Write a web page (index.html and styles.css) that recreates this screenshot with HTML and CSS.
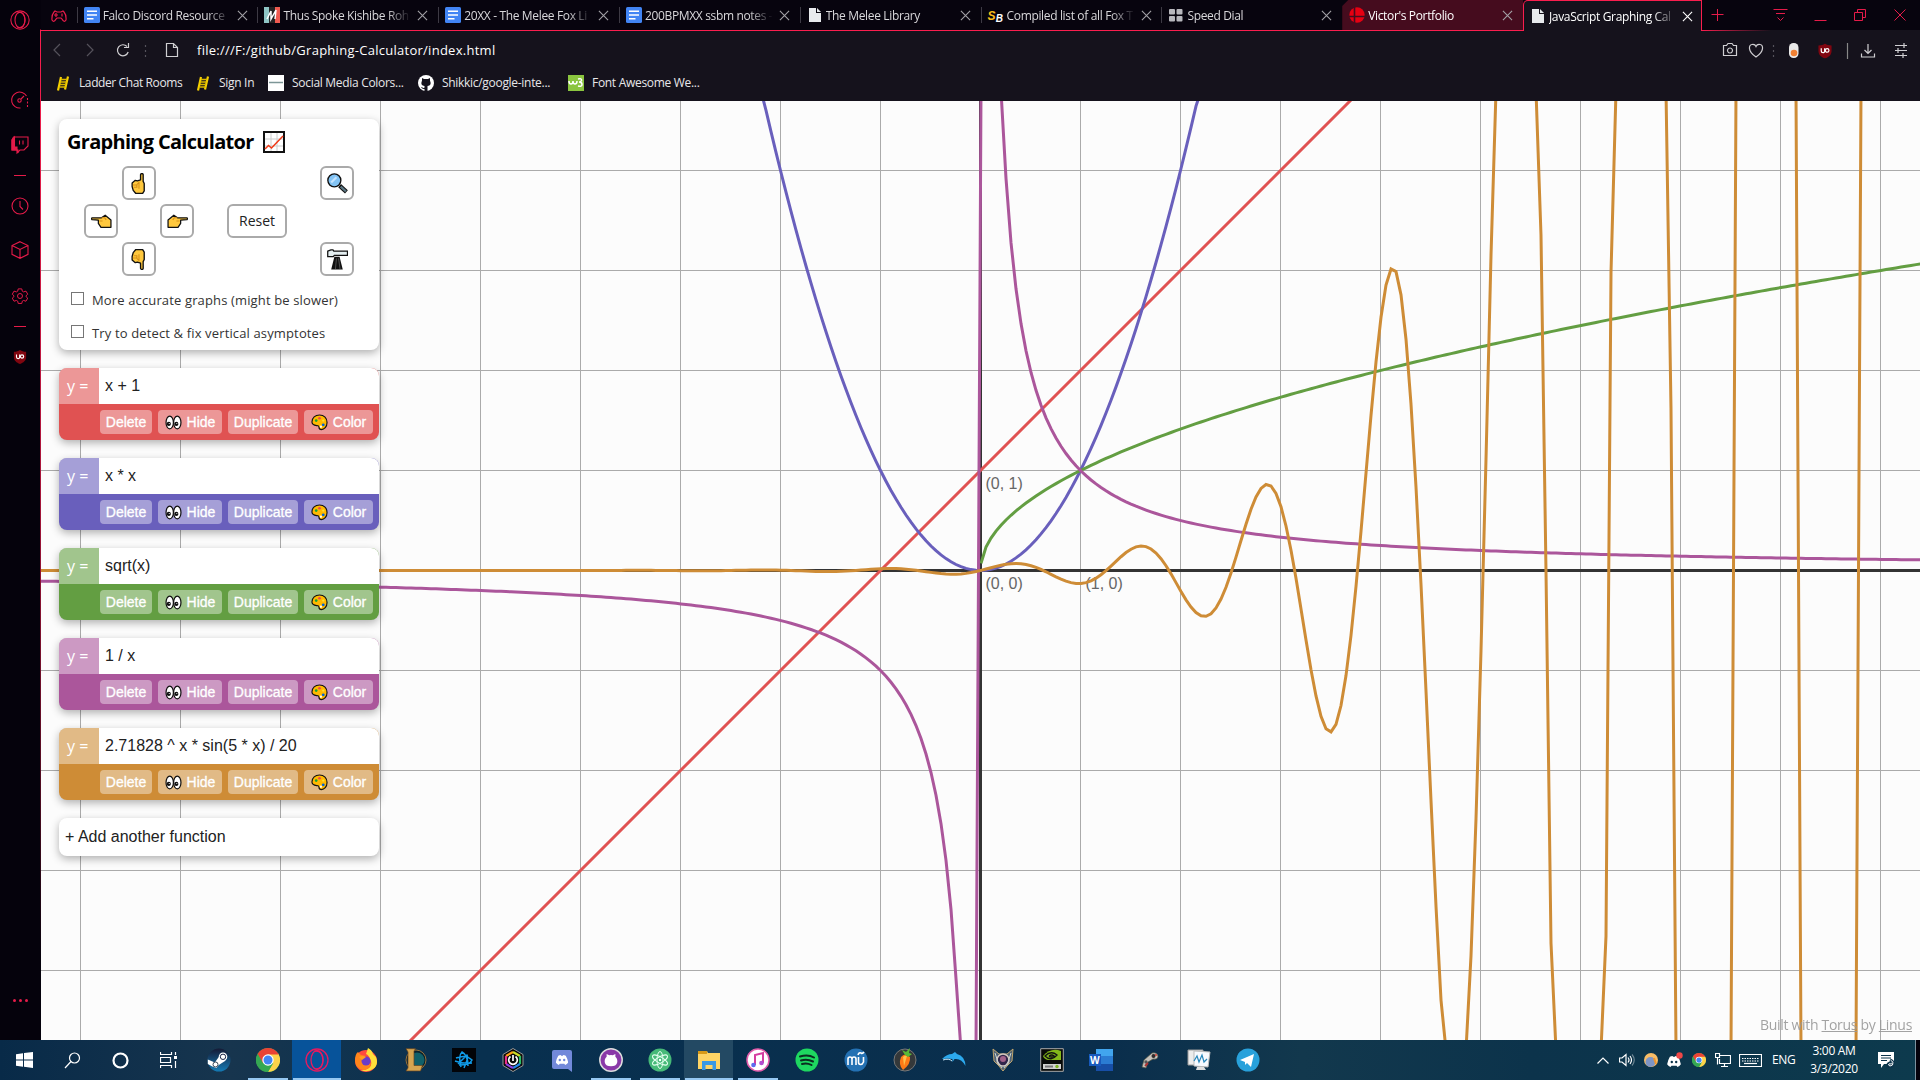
FILE: index.html
```html
<!DOCTYPE html>
<html lang="en">
<head>
    <meta charset="UTF-8">
    <title>JavaScript Graphing Calculator</title>
    <link rel="stylesheet" href="styles.css">
</head>
<body>
    <svg class="sprites" width="0" height="0">
        <symbol id="close" viewBox="0 0 12 12"><path d="M1 1l10 10M11 1L1 11" fill="none" stroke="currentColor" stroke-width="1.2"/></symbol>
        <symbol id="doc" viewBox="0 0 16 16"><rect width="16" height="16" rx="1.5" fill="#4285f4"/><path d="M3 4.2h10M3 8h10M3 11.8h6.5" stroke="#fff" stroke-width="1.6"/></symbol>
        <symbol id="page" viewBox="0 0 16 16"><path d="M2 1h7v5h5v9H2z" fill="#e8eaed"/><path d="M10 1l4 4h-4z" fill="#e8eaed"/></symbol>
        <symbol id="ladder" viewBox="0 0 16 16"><path d="M6 2L3 15.500M13 1.500l-3 13" stroke="#f5d000" stroke-width="2.200"/><path d="M6 4.500h6M5.500 7h6M5 9.500h6M4.500 12h6" stroke="#d9b800" stroke-width="1.500"/></symbol>
        <symbol id="ublock" viewBox="0 0 16 16"><path d="M8 0c2 1.500 4 2 7 2v6c0 4-3 6.500-7 8-4-1.500-7-4-7-8V2c3 0 5-.5 7-2z" fill="#800610"/><path d="M4 5v3q0 1.800 1.800 1.800T7.600 8V5" fill="none" stroke="#fff" stroke-width="1.300"/><circle cx="10.300" cy="7.400" r="1.900" fill="none" stroke="#fff" stroke-width="1.300"/></symbol>
        <symbol id="opera" viewBox="0 0 24 24"><g fill="none" stroke="currentColor" stroke-width="1.300"><circle cx="12" cy="12" r="11"/><ellipse cx="12" cy="12" rx="6" ry="9.500"/><path d="M9 3.500c12-4 12 21 0 17"/></g></symbol>
        <symbol id="chrome" viewBox="0 0 24 24"><circle cx="12" cy="12" r="12" fill="#4caf50"/><path d="M1.600 6a12 12 0 0 1 20.800 0L12 12z" fill="#ea4335"/><path d="M1.600 6l5.200 9L12 6.500z" fill="#ea4335"/><path d="M22.400 6A12 12 0 0 1 12 24l5.200-9L12 6z" fill="#fdd34a"/><path d="M1.600 6a12 12 0 0 0 10.400 18l5.200-9-5 1.500-5.400-1.500z" fill="#35a853"/><path d="M12 6h10.400" stroke="#ea4335"/><circle cx="12" cy="12" r="5.700" fill="#fff"/><circle cx="12" cy="12" r="4.500" fill="#4285f4"/></symbol>
        <symbol id="discord" viewBox="0 0 20 16"><path d="M4 1q2-1 4-1l.5 1h3L12 0q2 0 4 1 3 5 4 11-2 3-5 4l-1.300-2h-7.400L5 16q-3-1-5-4Q1 6 4 1z" fill="currentColor"/></symbol>
        <symbol id="cat" viewBox="0 0 16 16"><path d="M3 3v-3l3 1.500q2-.5 4 0L13 0v3q3 3 2 7-1 4-7 4t-7-4q-1-4 2-7z" fill="currentColor"/></symbol>
        <symbol id="hand" viewBox="0 0 20 20"><path d="M11 1.500q.3-1 1.300-1t1.200 1v6.500l1 2v7l-1.500 2.500H6.500L4 16.500 3 13V9.500L6 7l2 .5 3-1z" fill="#ffc83d" stroke="#111" stroke-width="1.300" stroke-linejoin="round"/><path d="M3.500 11.500h4v2h-3M7.500 11l2-2v6" fill="none" stroke="#d68f18" stroke-width="1"/></symbol>
        <symbol id="hand-side" viewBox="0 0 20 20"><path d="M1 6.500q-1 .8 0 1.800l6 .5v3l2.500 3.700h9.500v-7L13.500 4 10 6.500z" fill="#ffc83d" stroke="#111" stroke-width="1.200" stroke-linejoin="round"/><path d="M10 6.500h3l1.500 2M8 9.500h3" fill="none" stroke="#d68f18"/></symbol>
        <symbol id="eyes" viewBox="0 0 18 16"><g fill="#fff" stroke="#111" stroke-width="1.300"><ellipse cx="5" cy="8" rx="3.900" ry="6.700"/><ellipse cx="13" cy="8" rx="3.900" ry="6.700"/></g><circle cx="4" cy="9.500" r="2.200" fill="#111"/><circle cx="12" cy="9.500" r="2.200" fill="#111"/><circle cx="4.500" cy="9" r=".6" fill="#fff"/><circle cx="12.500" cy="9" r=".6" fill="#fff"/></symbol>
        <symbol id="palette" viewBox="0 0 18 18"><path d="M9 1c5 0 8 3.500 8 8 0 4.500-3 7.500-6 7.500-4 0-1.500-3.500-3.500-4S1 12.500 1 8.500C1 4 4.500 1 9 1z" fill="#ffb900" stroke="#111" stroke-width="1.200"/><circle cx="5.500" cy="7" r="1.400" fill="#16a339"/><circle cx="9" cy="4.500" r="1.400" fill="#e74856"/><circle cx="13" cy="11.500" r="1.500" fill="#0063d8"/><circle cx="13" cy="7" r="1.200" fill="#ffe03a"/><circle cx="10.500" cy="13.500" r="1.200" fill="#fff"/></symbol>
    </svg>

    <div class="window">
        <nav class="sidebar">
            <svg class="side-logo" viewBox="0 0 24 24"><use href="#opera"/></svg>
            <svg class="side-speed" viewBox="0 0 18 18"><path d="M9.500 17A8 8 0 1 1 15.500 5" /><path d="M16.500 7v9" stroke-dasharray="2 1.500"/><circle cx="8.500" cy="9.500" r="1.700"/><path d="M10 8l3-3"/></svg>
            <svg class="side-twitch" viewBox="0 0 18 18"><path d="M2.500 1H17v9l-4 4H9l-3 3v-3H1V4z"/><path d="M1 4l2.500-3v10H6v3L7 17v-3H1z" fill="currentColor"/><path d="M8.500 4.500v4M12 4.500v4"/></svg>
            <hr>
            <svg class="side-clock" viewBox="0 0 18 18"><circle cx="9" cy="9" r="8"/><path d="M9 4v5.500l3 3"/></svg>
            <svg class="side-cube" viewBox="0 0 18 18"><path d="M9 .7l8 3.800v8.800l-8 4-8-4V4.500zM1 4.500l8 4 8-4M9 8.500v8.800"/></svg>
            <svg class="side-gear" viewBox="0 0 18 18"><circle cx="9" cy="9" r="2.800"/><path d="M7 1h4l.6 2.600 1.500.8L15.700 3.500l2 3.500-2 1.800v.8l2 1.800-2 3.500-2.600-.9-1.500.8L11 17.400H7l-.6-2.600-1.500-.8-2.600.9-2-3.500 2-1.800v-.8L.3 7l2-3.500 2.600.9 1.500-.8z"/></svg>
            <hr class="second">
            <svg class="side-ublock" viewBox="0 0 16 16"><use href="#ublock"/></svg>
            <div class="side-more"><i></i><i></i><i></i></div>
        </nav>

        <main class="browser">
            <div class="tabs">
                <div class="pinned"><svg width="16" height="12" viewBox="0 0 16 12"><path d="M4 1L3 2Q.5 5 1 10q2 3 4-1l1-1h4l1 1q2 4 4 1 .5-5-2-8l-1-1-2 1H6z"/><path d="M3 5h4M5 3v4M11 3.500v3"/></svg></div>
                <div class="tab"><svg class="fav"><use href="#doc"/></svg><span>Falco Discord Resource</span><svg class="x"><use href="#close"/></svg></div>
                <div class="tab"><svg class="fav" viewBox="0 0 16 16"><path d="M0 0h5v16H0z" fill="#8ec5c5"/><path d="M5 0h6v16H5z" fill="#222"/><path d="M11 0h5v16h-5z" fill="#ef5a50"/><path d="M3 12l4-8v8l5-9-1 9" fill="none" stroke="#fff" stroke-width="1.500"/></svg><span>Thus Spoke Kishibe Roh</span><svg class="x"><use href="#close"/></svg></div>
                <div class="tab"><svg class="fav"><use href="#doc"/></svg><span>20XX - The Melee Fox Li</span><svg class="x"><use href="#close"/></svg></div>
                <div class="tab"><svg class="fav"><use href="#doc"/></svg><span>200BPMXX ssbm notes -</span><svg class="x"><use href="#close"/></svg></div>
                <div class="tab"><svg class="fav"><use href="#page"/></svg><span>The Melee Library</span><svg class="x"><use href="#close"/></svg></div>
                <div class="tab"><b class="fav sb"><i>S</i>B</b><span>Compiled list of all Fox T</span><svg class="x"><use href="#close"/></svg></div>
                <div class="tab"><svg class="fav" viewBox="0 0 16 16" fill="#b8b8bd"><rect x="1" y="2" width="6" height="5.500" rx="1"/><rect x="8.500" y="2" width="6" height="5.500" rx="1"/><rect x="1" y="9" width="6" height="5.500" rx="1"/><rect x="8.500" y="9" width="6" height="5.500" rx="1"/></svg><span>Speed Dial</span><svg class="x"><use href="#close"/></svg></div>
                <div class="tab visited"><svg class="fav" viewBox="0 0 16 16"><circle cx="8" cy="8" r="7.700" fill="#e60012"/><path d="M5.500 0v16M0 9.500h16" stroke="#450c1e" stroke-width="1.600"/></svg><span>Victor's Portfolio</span><svg class="x"><use href="#close"/></svg></div>
                <div class="tab active"><svg class="fav"><use href="#page"/></svg><span>JavaScript Graphing Cal</span><svg class="x"><use href="#close"/></svg></div>
                <div class="window-buttons">
                    <svg viewBox="0 0 218 31"><path d="M15.500 9v12M9.500 14.500h12"/><path d="M71.500 9.500h14M74 13.500h9M75.500 17.500l3 3 3-3M112.500 20.500h12M152.500 12.500h8v8h-8zM155.500 12V9.500h8v8H161M192.500 9.500l11 11M203.500 9.500l-11 11"/></svg>
                </div>
            </div>

            <div class="toolbar">
                <svg class="nav-icons" viewBox="0 0 150 40"><g class="dim"><path d="M19 13l-6 6 6 6M46 13l6 6-6 6"/><path d="M104.500 14v12" stroke-dasharray="2 3"/></g><path d="M86 15.500a5.500 5.500 0 1 0 1.200 5.500M87.500 12v4.500H83"/><path d="M125.500 12.500h7l4 4v9h-11zM132.500 12.500v4h4"/></svg>
                <div class="url">file:///F:/github/Graphing-Calculator/index.html</div>
                <svg class="tools" viewBox="0 0 200 40">
                    <path d="M3.500 14.500h3l1.500-2h4l1.500 2h3v10h-13zM10 17a2.500 2.500 0 1 0 .01 0zM36 26c-9-6-7-12-4-12.500q3-.5 4 2 1-2.500 4-2c3 .5 5 6.500-4 12.500z"/>
                    <path class="dim" d="M53.500 14v12" stroke-dasharray="2 3"/>
                    <rect x="69" y="12" width="9.500" height="15" rx="4.500" fill="#e9e9e9" stroke="none"/><circle cx="74" cy="22" r="3.300" fill="#f08033" stroke="none"/>
                    <svg class="shield" x="97.500" y="12" width="15" height="16" viewBox="0 0 16 16"><use href="#ublock"/></svg>
                    <path stroke="#888" d="M127.500 12v16"/>
                    <path d="M148 13v9M144.500 19l3.500 3.500 3.500-3.500M141.500 22.500v3.500h13v-3.500"/>
                    <path d="M175 14.500h12M175 19.500h12M175 24.500h12M184 12v5M178 17v5M183 22v5"/>
                </svg>
            </div>

            <div class="bookmarks">
                <a class="bm1"><svg><use href="#ladder"/></svg>Ladder Chat Rooms</a>
                <a class="bm2"><svg><use href="#ladder"/></svg>Sign In</a>
                <a class="bm3"><svg viewBox="0 0 16 16"><path fill="#fff" d="M0 0h16v16H0z"/><path d="M1 7.500h14" stroke="#7d9697" stroke-width="1.500"/></svg>Social Media Colors...</a>
                <a class="bm4"><svg viewBox="0 0 16 16"><circle cx="8" cy="8" r="8" fill="#fff"/><path d="M4 3l2 1h4l2-1v2.500q2 5-2.500 5.500v5h-3v-2q-2.500.5-3.500-2 1.500 0 2 1l1.500-.2v-1.800Q2 10.500 4 5.500z" fill="#15121c"/></svg>Shikkic/google-inte...</a>
                <a class="bm5"><svg viewBox="0 0 16 16"><path fill="#8bc53f" d="M0 0h16v16H0z"/><path d="M1 6q0 3 2 3t2-3q0 3 2 3t2-3M10 4q4-1 3.500 1.500Q13 7 11 7q3 0 3 2.500T10 11" fill="none" stroke="#fff" stroke-width="1.500"/></svg>Font Awesome We...</a>
            </div>

            <section class="viewport">
                <svg id="graph" width="1879" height="939"></svg>

                <div class="panels">
                    <div class="panel controls">
                        <h1>Graphing Calculator <svg viewBox="0 0 22 22"><path d="M1 1h20v20H1z" fill="#fff" stroke="#111" stroke-width="2"/><path d="M2 8h18M2 15h18M8 2v18M14 2v18" stroke="#ccc"/><path d="M2 18l3.500-3.500 3 2.500L20 5" fill="none" stroke="#f03a17" stroke-width="1.500"/></svg></h1>
                        <div class="pad">
                            <button class="up"><svg><use href="#hand"/></svg></button>
                            <button class="left"><svg><use href="#hand-side"/></svg></button>
                            <button class="right"><svg><use href="#hand-side"/></svg></button>
                            <button class="down"><svg><use href="#hand"/></svg></button>
                            <button class="reset">Reset</button>
                            <button class="zoom-in"><svg viewBox="0 0 20 20"><path d="M12 12l6.500 6" stroke="#111" stroke-width="4"/><path d="M13 13l5 4.500" stroke="#5b7784" stroke-width="2"/><circle cx="7" cy="7" r="6.200" fill="#83c4f5" stroke="#111" stroke-width="1.300"/><path d="M4 9l5-5" stroke="#c5e4ff" stroke-width="2"/></svg></button>
                            <button class="zoom-out"><svg viewBox="0 0 20 20"><path d="M7 7.500L4 19.500h11L12 7.500z" fill="#111"/><path d="M9 9l-1 10.500M11 9l1.500 10.500" stroke="#888" stroke-width=".5"/><path d="M.7 2l3-1.200h2L6.500 2h13v4H7L6 7.200H.7z" fill="#e4eef0" stroke="#111" stroke-width="1.200"/></svg></button>
                        </div>
                        <label><input type="checkbox">More accurate graphs (might be slower)</label>
                        <label><input type="checkbox">Try to detect &amp; fix vertical asymptotes</label>
                    </div>

                    <div class="panel function red">
                        <div class="equation"><span>y =</span><p>x + 1</p></div>
                        <div class="actions"><button>Delete</button><button><svg><use href="#eyes"/></svg>Hide</button><button>Duplicate</button><button><svg><use href="#palette"/></svg>Color</button></div>
                    </div>
                    <div class="panel function blue">
                        <div class="equation"><span>y =</span><p>x * x</p></div>
                        <div class="actions"><button>Delete</button><button><svg><use href="#eyes"/></svg>Hide</button><button>Duplicate</button><button><svg><use href="#palette"/></svg>Color</button></div>
                    </div>
                    <div class="panel function green">
                        <div class="equation"><span>y =</span><p>sqrt(x)</p></div>
                        <div class="actions"><button>Delete</button><button><svg><use href="#eyes"/></svg>Hide</button><button>Duplicate</button><button><svg><use href="#palette"/></svg>Color</button></div>
                    </div>
                    <div class="panel function purple">
                        <div class="equation"><span>y =</span><p>1 / x</p></div>
                        <div class="actions"><button>Delete</button><button><svg><use href="#eyes"/></svg>Hide</button><button>Duplicate</button><button><svg><use href="#palette"/></svg>Color</button></div>
                    </div>
                    <div class="panel function orange">
                        <div class="equation"><span>y =</span><p>2.71828 ^ x * sin(5 * x) / 20</p></div>
                        <div class="actions"><button>Delete</button><button><svg><use href="#eyes"/></svg>Hide</button><button>Duplicate</button><button><svg><use href="#palette"/></svg>Color</button></div>
                    </div>
                    <div class="panel add">+ Add another function</div>
                </div>

                <footer>Built with <u>Torus</u> by <u>Linus</u></footer>
            </section>
        </main>
    </div>

    <div class="taskbar">
        <div class="system">
            <div><svg width="17" height="16" viewBox="0 0 17 16" fill="#fff"><path d="M0 2.300l7-1v6.200H0zM8 1.100L17 0v7.500H8zM0 8.500h7v6.200l-7-1zM8 8.500h9V16l-9-1.200z"/></svg></div>
            <div><svg class="line" width="17" height="17" viewBox="0 0 17 17"><circle cx="10.500" cy="6" r="5"/><path d="M7 9.500L1 16"/></svg></div>
            <div><svg class="line" width="17" height="17" viewBox="0 0 17 17"><circle cx="8.500" cy="8.500" r="7" stroke-width="2.200"/></svg></div>
            <div><svg class="line" width="17" height="16" viewBox="0 0 17 16"><path d="M.5 0v2.500h11V0M.5 16v-2.500h11V16M.5 5.500h10v5H.5zM15.500 0v3M15.500 9v7"/><path d="M14 4h3v3h-3z" fill="#fff" stroke="none"/></svg></div>
        </div>
        <div class="apps">
            <div><svg viewBox="0 0 24 24"><defs><linearGradient id="steam" x2="0" y2="1"><stop offset="0" stop-color="#151a35"/><stop offset="1" stop-color="#147bb5"/></linearGradient></defs><circle cx="12" cy="12" r="11.500" fill="url(#steam)"/><path d="M.8 11.500l7 3 4-5.500 7 3.500-7 4.500-2.500 3-4-1.500L.8 16z" fill="#fff"/><circle cx="16" cy="8.800" r="4.300" fill="#fff"/><circle cx="16" cy="8.800" r="2.700" fill="#fff" stroke="#1a2548"/><circle cx="8.500" cy="16.500" r="2.500" fill="#fff" stroke="#345"/></svg></div>
            <div class="open"><svg><use href="#chrome"/></svg></div>
            <div class="open current"><svg class="pink"><use href="#opera"/></svg></div>
            <div><svg viewBox="0 0 24 24"><circle cx="12" cy="13" r="11" fill="#ff4b3e"/><path d="M14 0q4 2 5 6l3 3q3 8-3 12-6 4-12 1 12 0 10-9-2-6-5-7z" fill="#ffdf3a"/><path d="M1 13q0-7 3-9l3 3 5 1q-4 3-3 7 3 4 8 0-1 7-8 7-7-1-8-9z" fill="#ff851b"/><circle cx="12" cy="13" r="4.500" fill="#6a3cc8"/><path d="M5 9q4-2 7 0l-4 3z" fill="#ff9d1e"/></svg></div>
            <div><svg viewBox="0 0 24 24"><circle cx="13" cy="12" r="10" fill="#09222d" stroke="#96713b"/><circle cx="14" cy="12" r="7.500" fill="#10606a"/><path d="M3 .7h9.500L11 3v14.500h8.500l-2 5.500H3l2-3V4z" fill="#d5a551" stroke="#664420" stroke-width=".7"/></svg></div>
            <div><svg viewBox="0 0 24 24"><path d="M0 0h24v24H0z" fill="#020408"/><g fill="none" stroke="#119be8" stroke-width="1.500"><path d="M9 19Q6 8 10 4q6 3 6 14M4 10q10-4 16 2-2 5-13 5M6 16L15 7q2 2-3 13M3 13q8 3 17 2"/></g></svg></div>
            <div><svg viewBox="0 0 24 24"><path d="M12 .5l10 6v11l-10 6-10-6v-11z" fill="#080808" stroke="#999"/><g fill="none" stroke-width="2.200"><path d="M5 8l7-4" stroke="#fd9e14"/><path d="M12 4l7 4" stroke="#cbdc25"/><path d="M19 8v8" stroke="#2abf66"/><path d="M19 16l-7 4" stroke="#2187e8"/><path d="M12 20l-7-4" stroke="#8b40e1"/><path d="M5 16V8" stroke="#e8308a"/></g><circle cx="12" cy="12" r="5.500" fill="#080808"/><path d="M9.500 8.500a4.300 4.300 0 1 0 5 0M12 7v6" fill="none" stroke="#fff" stroke-width="1.700"/></svg></div>
            <div><svg viewBox="0 0 24 24"><path d="M4 2h16q2 0 2 2v20l-4-3H4q-2 0-2-2V4q0-2 2-2z" fill="#7289da"/><svg x="5.500" y="7" width="13" height="10" color="#fff"><use href="#discord"/></svg><circle cx="9.800" cy="12" r="1.200" fill="#7289da"/><circle cx="14.200" cy="12" r="1.200" fill="#7289da"/></svg></div>
            <div class="open"><svg viewBox="0 0 24 24"><circle cx="12" cy="12" r="11.200" fill="#8a39a8" stroke="#ddd" stroke-width="1.500"/><svg x="5" y="6" width="14" height="14" color="#fff"><use href="#cat"/></svg></svg></div>
            <div class="open"><svg viewBox="0 0 24 24"><circle cx="12" cy="12" r="11.500" fill="#46b978"/><g fill="none" stroke="#e5fff0"><ellipse cx="12" cy="12" rx="3" ry="8.500"/><ellipse cx="12" cy="12" rx="3" ry="8.500" transform="rotate(60 12 12)"/><ellipse cx="12" cy="12" rx="3" ry="8.500" transform="rotate(-60 12 12)"/></g><circle cx="12" cy="12" r="1.200" fill="#fff"/></svg></div>
            <div class="open files"><svg viewBox="0 0 24 24"><path d="M1 3h9l1 2h12v16H1z" fill="#ffd465"/><path d="M1 3h9v3H1z" fill="#d99a18"/><path d="M5 13h14v9h-3.500v-5h-7v5H5z" fill="#3998e5"/></svg></div>
            <div class="open"><svg viewBox="0 0 24 24"><circle cx="12" cy="12" r="11" fill="#fff" stroke="#e25cab" stroke-width="1.500"/><path d="M9 17V7l8-2v10" fill="none" stroke="#d43da0" stroke-width="2"/><circle cx="7.500" cy="17" r="2.300" fill="#5c6cef"/><circle cx="15.500" cy="15" r="2.300" fill="#b24ed0"/></svg></div>
            <div><svg viewBox="0 0 24 24"><circle cx="12" cy="12" r="11.500" fill="#1ed760"/><path d="M5 8.500q8-2.500 14 1M6 12.500q6-2 12 1M7 16q5-1.500 9.500 1" fill="none" stroke="#0b2c20" stroke-width="2" stroke-linecap="round"/></svg></div>
            <div><svg viewBox="0 0 24 24"><circle cx="12" cy="12" r="11.500" fill="#2471b3"/><path d="M4 17V11q0-2 2-2t2 2v6V11q0-2 2-2t2 2v6M14.500 9v5q0 2.500 2 2.500t3-2.500V9M14 7q1-3 3-2 1.500 1 3-1" fill="none" stroke="#fff" stroke-width="1.600"/></svg></div>
            <div><svg viewBox="0 0 24 24"><circle cx="12" cy="12" r="11" fill="#34383a" stroke="#777"/><path d="M8 9q4-5 9 0 1 7-7 13-5-5-2-13z" fill="#ff7a16"/><path d="M10 9q2-2 4-1l-3 10z" fill="#ffc04a"/><path d="M12 7L9 2l4 2 4-4-1 5 3 1-4 3z" fill="#58b836"/></svg></div>
            <div><svg viewBox="0 0 24 24"><path d="M0 11q5-5 10-5l3-2 2 2q8 2 8.500 12-4-8-11-7l-2 3v-3q-5-1-10 0z" fill="#2ca9ed"/><path d="M1 12q6-2 9 1" fill="none" stroke="#cfefff"/></svg></div>
            <div><svg viewBox="0 0 24 24"><path d="M2 1l6 5h8l6-5-1 12-5 5-4 5-4-5-5-5z" fill="#506275" stroke="#bfa46c"/><circle cx="12" cy="12" r="6" fill="#32264b" stroke="#d2c7be" stroke-width="1.500"/><circle cx="12" cy="11" r="3" fill="#a1628a"/><path d="M4 5l3 9 4 6M20 5l-3 9-4 6" fill="none" stroke="#ccd7d3"/></svg></div>
            <div><svg viewBox="0 0 24 24"><path d="M.7.7h22.600v22.600H.7z" fill="#080a08" stroke="#aaa"/><path d="M3 8q8-9 18-5v9H8q-4-1-5-4z" fill="#83b81a"/><path d="M5 8q6-6 12-1-6 7-12 1zM9 8q3-2 5 0-3 2-5 0" fill="none" stroke="#111" stroke-width="1.300"/><path d="M3 16h18v5H3z" fill="#d1d2cf"/><circle cx="17" cy="18.500" r="1.700" fill="#7db324"/><path d="M5 18.500h8" stroke="#777" stroke-width="2"/></svg></div>
            <div><svg viewBox="0 0 24 24"><path d="M7 1h17v7H7z" fill="#41a5ee"/><path d="M7 8h17v8H7z" fill="#2b7cd3"/><path d="M7 16h17v7H7z" fill="#174ea6"/><path d="M0 6h12v12H0z" fill="#185abd"/><text x="1" y="16" fill="#fff" font-size="10" font-weight="bold">W</text></svg></div>
            <div><svg viewBox="0 0 24 24"><path d="M4 19l2-7 8-7q6-1 6 4-1 3-5 2l-5 3-2 6z" fill="#c7c3bc" stroke="#554" stroke-width=".7"/><circle cx="15.500" cy="8" r="2" fill="#302b2b"/><circle cx="18" cy="7" r="1" fill="#d63c32"/><circle cx="8" cy="14" r="1.700" fill="#555"/><path d="M7 18l3-3" stroke="#a33" stroke-width="2"/></svg></div>
            <div><svg viewBox="0 0 24 24"><path d="M1 2h15v15H1z" fill="#ececec" stroke="#999"/><path d="M7 3l16 1-2 15-14-1z" fill="#f7faff" stroke="#bbb"/><path d="M7 13l3-5 2 6 3-7 2 7 3-3" fill="none" stroke="#2887bb" stroke-width="1.200"/><path d="M10 19h7l2 3H9z" fill="#ddd"/></svg></div>
            <div><svg viewBox="0 0 24 24"><circle cx="12" cy="12" r="11.500" fill="#28a1db"/><path d="M4 12l14-6-3 13-4-4-2 2v-3z" fill="#fff"/></svg></div>
        </div>
        <div class="tray">
            <svg class="line chevron" viewBox="0 0 12 7"><path d="M.5 6.500L6 1l5.500 5.500"/></svg>
            <svg class="line speaker" viewBox="0 0 16 14"><path d="M.5 5v4H3l4 3.500v-11L3 5zM9 4.500q2 2.500 0 5M11 3q3 4 0 8"/><path d="M13 1.500q4.500 5.500 0 11" opacity=".4"/></svg>
            <svg class="dot" viewBox="0 0 14 14"><circle cx="7" cy="7" r="7" fill="#f7bd67"/><circle cx="6.500" cy="9" r="5" fill="#7e95c5"/><path d="M10 5l2 6" stroke="#ee952b" stroke-width="2"/></svg>
            <svg class="tray-discord" viewBox="0 0 16 16"><svg y="4" width="14" height="11" color="#fff"><use href="#discord"/></svg><circle cx="4.800" cy="10" r="1.200" fill="#0c344b"/><circle cx="9.200" cy="10" r="1.200" fill="#0c344b"/><circle cx="12.500" cy="3.500" r="3.200" fill="#f04747"/></svg>
            <svg class="tray-chrome"><use href="#chrome"/></svg>
            <svg class="line network" viewBox="0 0 16 14"><path d="M4 2.500h11.500v8H4.500V6M.5.500h4v4h-4zM2.500 4.500v7M9.500 11v2.500M6 13.500h7"/></svg>
            <svg class="line keyboard" viewBox="0 0 23 13"><path d="M.5.500h22v12H.5z"/><path d="M3 4.500h17M3 7h17" stroke-dasharray="1.500 1"/><path d="M5 9.500h13"/></svg>
            <span class="lang">ENG</span>
            <div class="clock">3:00 AM<br>3/3/2020</div>
            <svg class="notes" viewBox="0 0 17 16"><path d="M0 0h16v12H6l-3 4v-4H0z" fill="#fff"/><path d="M3 3.500h10M3 6h10M3 8.500h6" stroke="#0c344b"/><path d="M12 8q5 2 2 6-4 2-4-1 0-2 3-2" fill="none" stroke="#0c344b" stroke-width="3"/><path d="M12.500 8q4 2 2 5-3 2-4 0 0-2 3-1" fill="none" stroke="#fff"/></svg>
        </div>
    </div>

    <script src="graph.js"></script>
</body>
</html>
```
FILE: styles.css
```css
* {
    box-sizing: border-box;
}
body {
    margin: 0;
    width: 1920px;
    height: 1080px;
    overflow: hidden;
    background: #05020c;
    font-family: "Open Sans", "Noto Sans", sans-serif;
    font-size: 12px;
}
svg {
    display: block;
    flex: none;
}
.sprites {
    position: absolute;
}
.window {
    display: flex;
    height: 1040px;
}

/* Sidebar */
.sidebar {
    width: 41px;
    border-right: 1px solid #a5153a;
    border-image: linear-gradient(#05020c 30px, #fa1e4e 31px, #a5153a 500px, #4c0c20 800px, #05020c 960px) 1;
    border-width: 0 1px 0 0;
    color: #e51b49;
    display: flex;
    flex-direction: column;
    align-items: center;
}
.sidebar svg {
    width: 18px;
    height: 18px;
    fill: none;
    stroke: currentColor;
    stroke-width: 1.1;
    overflow: visible;
}
.sidebar .side-logo {
    width: 20px;
    height: 20px;
    margin-top: 10px;
}
.sidebar .side-speed { margin-top: 61px; }
.sidebar .side-twitch { margin-top: 27px; }
.sidebar hr {
    width: 12px;
    height: 1px;
    border: 0;
    background: #e51b49;
    margin: 21px 0 0;
}
.sidebar .side-clock { margin-top: 21px; }
.sidebar .side-cube { margin-top: 26px; }
.sidebar .side-gear {
    width: 16px;
    height: 16px;
    margin-top: 29px;
}
.sidebar hr.second { margin-top: 22px; }
.sidebar .side-ublock {
    width: 14px;
    height: 16px;
    margin-top: 22px;
    stroke: none;
}
.side-more {
    display: flex;
    gap: 3px;
    margin-top: 634px;
}
.side-more i {
    width: 3px;
    height: 3px;
    border-radius: 50%;
    background: #e51b49;
}

/* Browser chrome */
.browser {
    width: 1879px;
}
.tabs {
    display: flex;
    height: 31px;
    background: linear-gradient(90deg, #fa1e4e 1660px, #15121c 1730px) bottom / 100% 1px no-repeat, #07040e;
}
.pinned {
    width: 37.5px;
    padding: 10px 0 0 10px;
}
.pinned svg {
    fill: none;
    stroke: #e51b49;
    stroke-width: 1.2;
}
.tab {
    width: 180.8px;
    flex: none;
    height: 30px;
    display: flex;
    align-items: center;
    padding-left: 7px;
    color: #d8d7da;
    background: linear-gradient(#3d3a44, #3d3a44) 0 7px / 1px 16px no-repeat;
}
.tab .fav {
    width: 16px;
    height: 16px;
}
.tab span {
    width: 128px;
    margin-left: 3px;
    overflow: hidden;
    white-space: nowrap;
    letter-spacing: -0.35px;
    -webkit-mask-image: linear-gradient(90deg, #000 104px, transparent 128px);
    mask-image: linear-gradient(90deg, #000 104px, transparent 128px);
}
.tab .x {
    width: 11px;
    height: 11px;
    margin-left: 6px;
    color: #a2a1a6;
}
.tab .sb {
    font: italic bold 10px "Liberation Sans", sans-serif;
    color: #fff;
    line-height: 18px;
}
.tab .sb i {
    color: #f8bd1a;
    font-size: 12px;
    vertical-align: 2px;
}
.tab.visited {
    background: #450c1e;
    clip-path: polygon(6px 0, 100% 0, 100% 100%, 0 100%, 0 6px);
    color: #fff;
}
.tab.active {
    width: 179px;
    height: 31px;
    padding-left: 6px;
    background: #15121c;
    border: 1px solid #fa1e4e;
    border-bottom: 0;
    border-top-left-radius: 5px;
    color: #fff;
}
.tab.active .x {
    color: #fff;
    margin-left: 5px;
}
.window-buttons svg {
    width: 218px;
    height: 31px;
    fill: none;
    stroke: #e51b49;
}
.toolbar {
    height: 40px;
    background: #15121c;
    display: flex;
    align-items: center;
}
.toolbar svg {
    fill: none;
    stroke: #d0cfd2;
    stroke-width: 1.2;
}
.toolbar .shield {
    stroke: none;
}
.toolbar .dim {
    stroke: #55525b;
}
.nav-icons {
    width: 150px;
    height: 40px;
}
.url {
    margin: -3px 0 0 6px;
    width: 1523px;
    font-size: 13px;
    letter-spacing: 0.27px;
    color: #fff;
}
.tools {
    width: 200px;
    height: 40px;
}
.bookmarks {
    height: 30px;
    background: #15121c;
    display: flex;
    align-items: center;
    padding: 0 0 7px 14px;
    color: #e8e7e9;
    letter-spacing: -0.3px;
}
.bookmarks a {
    display: flex;
    align-items: center;
    gap: 8px;
    white-space: nowrap;
}
.bookmarks svg {
    width: 16px;
    height: 16px;
}
.bm1 { width: 140px; letter-spacing: -0.4px; }
.bm2 { width: 73px; }
.bm3 { width: 150px; }
.bm4 { width: 150px; }

/* Page */
.viewport {
    position: relative;
    height: 939px;
    background: #fcfcfc;
    overflow: hidden;
}
#graph {
    position: absolute;
    top: 0;
    left: 0;
}
#graph .grid {
    stroke: #aaa;
    stroke-width: 1;
}
#graph .axis {
    stroke: #333;
    stroke-width: 3;
}
#graph text {
    font: 16px "Liberation Sans", sans-serif;
    fill: #666;
}
#graph polyline {
    fill: none;
    stroke-width: 3;
}
.panels {
    position: relative;
    width: 320px;
    margin: 18px 0 0 18px;
    display: flex;
    flex-direction: column;
    gap: 18px;
}
.panel {
    background: #fff;
    border-radius: 8px;
    box-shadow: 0 3px 8px rgba(0, 0, 0, .3);
    overflow: hidden;
}
.controls {
    height: 231px;
    padding: 8px 8px;
}
.controls h1 {
    height: 29px;
    margin: 0;
    display: flex;
    align-items: center;
    gap: 9px;
    font-size: 20px;
    letter-spacing: -0.7px;
    white-space: nowrap;
}
.controls h1 svg {
    width: 22px;
    height: 22px;
}
.pad {
    display: grid;
    grid-template-columns: 34px 34px 34px 60px 34px;
    grid-template-rows: repeat(3, 34px);
    gap: 4px;
    padding: 10px 0 0 17px;
}
.pad button {
    padding: 0;
    display: flex;
    align-items: center;
    justify-content: center;
    border: 2px solid #aaa;
    border-radius: 6px;
    background: #fff;
}
.pad svg {
    width: 21px;
    height: 21px;
}
.up { grid-area: 1 / 2; }
.left { grid-area: 2 / 1; }
.right { grid-area: 2 / 3; }
.down { grid-area: 3 / 2; }
.right svg { transform: scaleX(-1); }
.down svg { transform: scaleY(-1); }
.pad .reset {
    grid-area: 2 / 4;
    width: 60px;
    margin-left: 29px;
    padding-bottom: 1px;
    font: 14px "Open Sans", sans-serif;
    color: #222;
}
.pad .zoom-in,
.pad .zoom-out {
    width: 34px;
    margin-left: 58px;
}
.zoom-in { grid-area: 1 / 5; }
.zoom-out { grid-area: 3 / 5; }
.controls label {
    display: flex;
    align-items: center;
    height: 20px;
    margin-top: 14px;
    font-size: 13px;
    letter-spacing: 0.14px;
    color: #333;
    white-space: nowrap;
}
.controls label + label {
    margin-top: 13px;
}
.controls input {
    appearance: none;
    width: 13px;
    height: 13px;
    margin: -4px 8px 0 4px;
    border: 1px solid #767676;
    background: #fff;
}
.function {
    height: 72px;
    background: var(--color);
    font-family: "Liberation Sans", Arial, sans-serif;
}
.red { --color: #e05252; }
.blue { --color: #695fbc; }
.green { --color: #639e42; }
.purple { --color: #ab569b; }
.orange { --color: #ce8c36; }
.equation {
    display: flex;
    height: 36px;
}
.equation span {
    width: 40px;
    padding: 1px 0 0 8px;
    background: rgba(255, 255, 255, .4);
    color: #fff;
    font: 16px/34px "Open Sans", sans-serif;
}
.equation p {
    flex: 1;
    margin: 0;
    padding-left: 6px;
    background: #fff;
    color: #222;
    font-size: 16px;
    line-height: 35px;
}
.actions {
    display: flex;
    gap: 6px;
    padding: 6px 6px 6px 41px;
}
.actions button {
    height: 24px;
    padding: 0;
    display: flex;
    align-items: center;
    justify-content: center;
    gap: 5px;
    border: 0;
    border-radius: 4px;
    background: rgba(255, 255, 255, .4);
    color: #fff;
    font: 14px "Liberation Sans", Arial, sans-serif;
    -webkit-text-stroke: 0.3px #fff;
}
.actions button:nth-child(1) { width: 52px; }
.actions button:nth-child(2) { width: 64px; }
.actions button:nth-child(3) { width: 70px; }
.actions button:nth-child(4) { width: 69px; }
.actions svg {
    width: 17px;
    height: 17px;
}
.add {
    height: 38px;
    padding-left: 6px;
    font: 16px/37px "Liberation Sans", Arial, sans-serif;
    color: #222;
}
footer {
    position: absolute;
    right: 8px;
    bottom: 6px;
    font-size: 14px;
    letter-spacing: -0.3px;
    color: #999;
    opacity: .9;
}

/* Taskbar */
.taskbar {
    height: 40px;
    background: linear-gradient(90deg, #082a48, #17354e 12%, #08304f 25%, #0a2e4c 58%, #12384d 68%, #0c334b 80%, #0d3a4d);
    border-right: 1px solid #7b929f;
    width: 1916px;
    display: flex;
    align-items: center;
    color: #fff;
}
.system,
.apps {
    display: flex;
    height: 40px;
}
.system div {
    width: 48px;
    display: flex;
    align-items: center;
    justify-content: center;
}
.apps {
    width: 1401px;
    padding-left: 2px;
}
.apps div {
    width: 49px;
    display: flex;
    align-items: center;
    justify-content: center;
    background: linear-gradient(#96c8f2, #96c8f2) center bottom / 40px 2px no-repeat;
    background-size: 0 0;
}
.apps div > svg {
    width: 24px;
    height: 24px;
}
.apps .open {
    background-size: 40px 2px;
}
.apps .current {
    background-color: #07539a;
    background-size: 48px 2px;
}
.apps .files {
    background-color: #234963;
    background-size: 48px 2px;
}
.pink {
    color: #e51b60;
}
.line {
    fill: none;
    stroke: #fff;
    stroke-width: 1.2;
}
.tray {
    display: flex;
    align-items: center;
}
.chevron { width: 12px; height: 7px; margin-left: 4px; }
.speaker { width: 16px; height: 14px; margin-left: 10px; }
.dot { width: 14px; height: 14px; margin-left: 9px; }
.tray-discord { width: 16px; height: 16px; margin-left: 9px; }
.tray-chrome { width: 14px; height: 14px; margin-left: 9px; }
.network { width: 16px; height: 14px; margin-left: 9px; }
.keyboard { width: 23px; height: 13px; margin-left: 8px; }
.lang {
    width: 24px;
    margin: -1px 0 0 10px;
    letter-spacing: -0.4px;
}
.clock {
    width: 60px;
    margin-left: 8px;
    text-align: center;
    line-height: 18px;
    letter-spacing: -0.3px;
}
.notes { width: 17px; height: 16px; margin-left: 14px; }
```
FILE: graph.js
```js
const svg = document.getElementById('graph');
const width = 1879;
const height = 939;
const cx = width / 2;
const cy = height / 2;
const unit = 100;
const step = 5;

function add(name, attrs, text) {
    const el = document.createElementNS('http://www.w3.org/2000/svg', name);
    for (const key in attrs) el.setAttribute(key, attrs[key]);
    if (text) el.textContent = text;
    svg.appendChild(el);
}

function line(x1, y1, x2, y2, cls) {
    add('line', { x1, y1, x2, y2, class: cls });
}

for (let x = cx % unit; x < width; x += unit) line(x, 0, x, height, 'grid');
for (let y = cy % unit; y < height; y += unit) line(0, y, width, y, 'grid');
line(cx, 0, cx, height, 'axis');
line(0, cy, width, cy, 'axis');

add('text', { x: cx + 5, y: cy + 18 }, '(0, 0)');
add('text', { x: cx + unit + 5, y: cy + 18 }, '(1, 0)');
add('text', { x: cx + 5, y: cy - unit + 18 }, '(0, 1)');

function plot(fn, color) {
    const points = [];
    for (let px = 0; px <= width + step; px += step) {
        let y = cy - fn((px - cx) / unit) * unit;
        if (isNaN(y)) continue;
        // keep off-screen values just outside of the canvas
        y = Math.max(-10, Math.min(height + 10, y));
        points.push(px + ',' + y.toFixed(2));
    }
    add('polyline', { points: points.join(' '), stroke: color });
}

plot(x => x + 1, '#e05252');
plot(x => x * x, '#695fbc');
plot(x => Math.sqrt(x), '#639e42');
plot(x => 1 / x, '#ab569b');
plot(x => Math.pow(2.71828, x) * Math.sin(5 * x) / 20, '#ce8c36');
```
